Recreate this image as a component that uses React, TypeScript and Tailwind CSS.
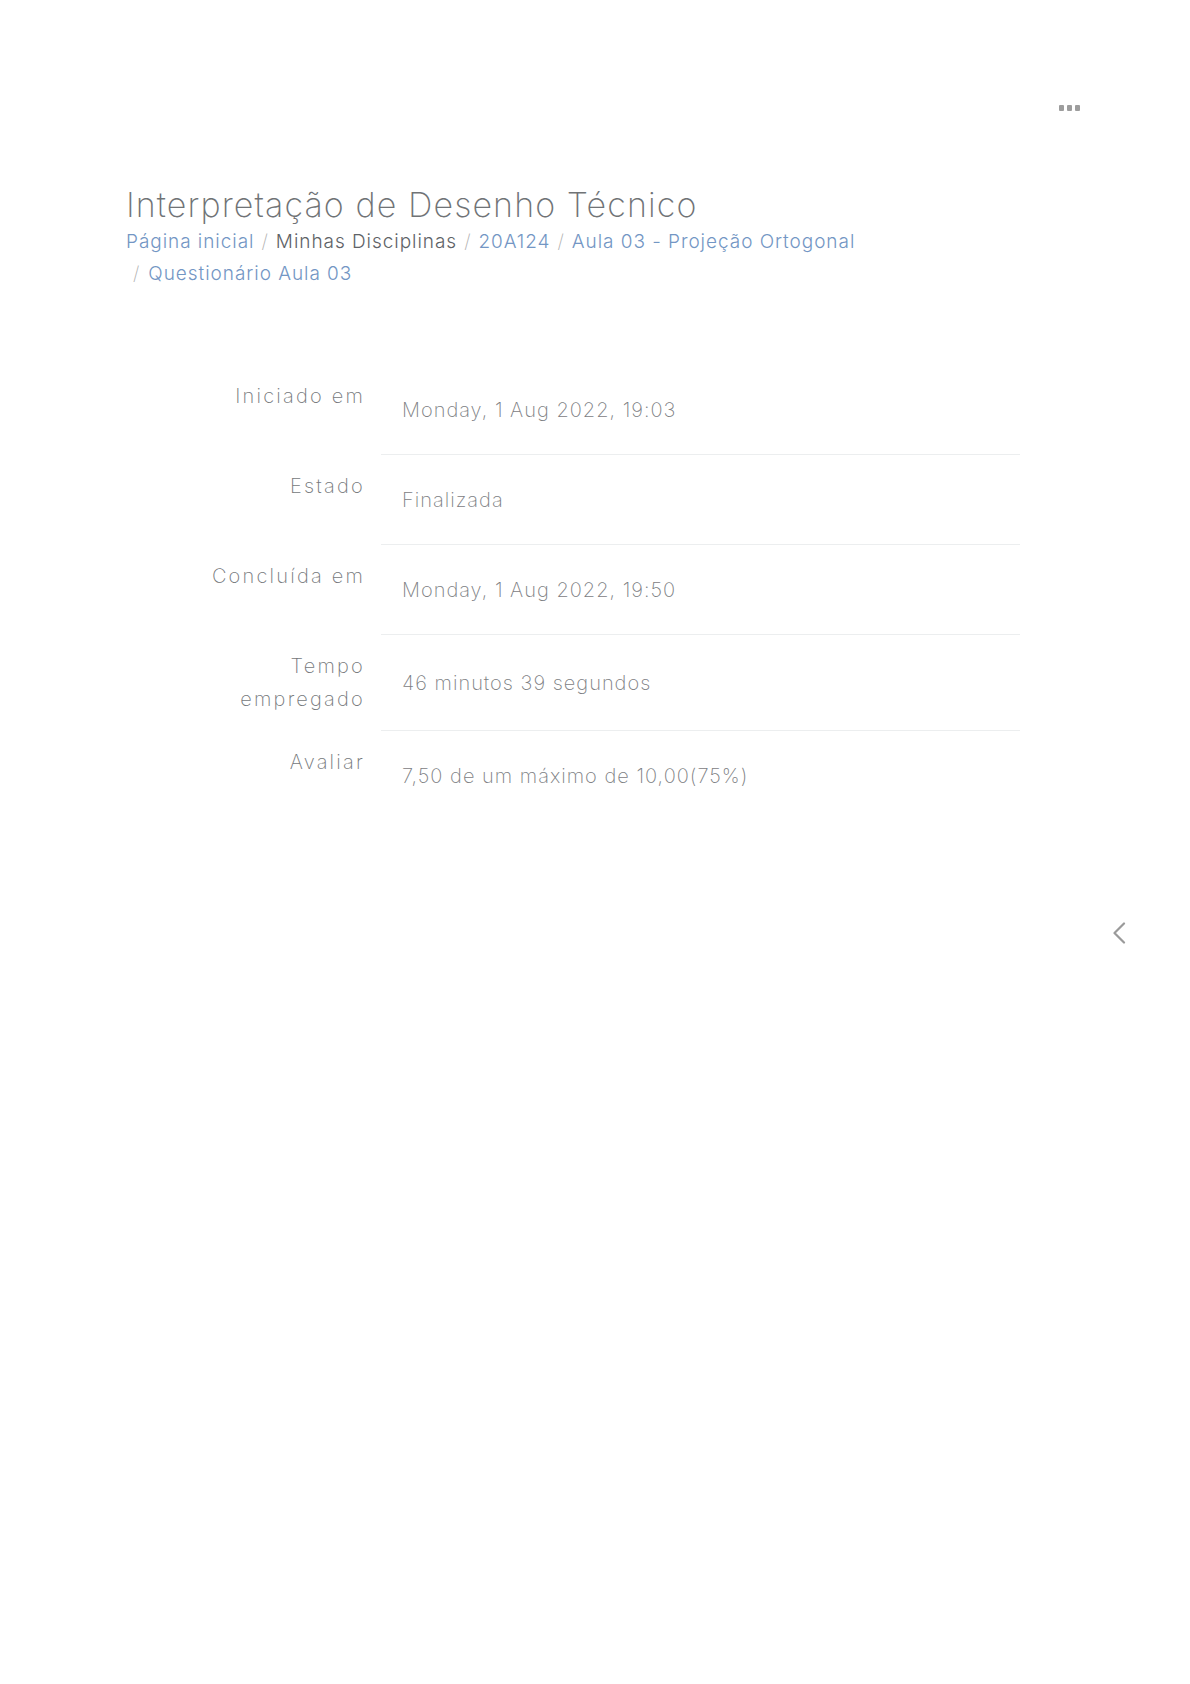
const font = { fontFamily: "Inter, 'Open Sans', sans-serif" };

const crumbs = [
  { label: "Página inicial", link: true },
  { label: "Minhas Disciplinas", link: false },
  { label: "20A124", link: true },
  { label: "Aula 03 - Projeção Ortogonal", link: true },
];

const rows: { label: string[]; value: string }[] = [
  { label: ["Iniciado em"], value: "Monday, 1 Aug 2022, 19:03" },
  { label: ["Estado"], value: "Finalizada" },
  { label: ["Concluída em"], value: "Monday, 1 Aug 2022, 19:50" },
  { label: ["Tempo", "empregado"], value: "46 minutos 39 segundos" },
  { label: ["Avaliar"], value: "7,50 de um máximo de 10,00(75%)" },
];

function Dots() {
  return (
    <div className="flex items-center gap-[3px]">
      <span className="w-[5px] h-[6px] rounded-[1px] bg-[#9d9d9d]" />
      <span className="w-[5px] h-[6px] rounded-[1px] bg-[#9d9d9d]" />
      <span className="w-[5px] h-[6px] rounded-[1px] bg-[#9d9d9d]" />
    </div>
  );
}

export default function App() {
  return (
    <div className="relative w-[1190px] min-h-[1684px] bg-white font-extralight" style={font}>
      {/* top bar */}
      <div className="flex justify-end pt-[105px] pr-[110px]">
        <Dots />
      </div>

      {/* page header */}
      <header className="pl-[126px] pt-[74px]">
        <h1 className="text-[34px] leading-[40px] text-[#707376] font-extralight tracking-[1.1px]">
          Interpretação de Desenho Técnico
        </h1>
        <nav className="mt-[1px] text-[19px] leading-[32px] tracking-[0.95px]">
          <div className="flex items-center">
            {crumbs.map((c, i) => (
              <span key={i} className="flex items-center">
                {i > 0 && <span className="px-[7px] text-[#b0b0b0]">/</span>}
                <span className={c.link ? "text-[#7396c4] font-light" : "text-[#606367] font-light"}>{c.label}</span>
              </span>
            ))}
          </div>
          <div className="flex items-center pl-[7px]">
            <span className="pr-[8px] text-[#b0b0b0]">/</span>
            <span className="text-[#7396c4] font-light">Questionário Aula 03</span>
          </div>
        </nav>
      </header>

      {/* attempt summary */}
      <div className="mt-[75px] ml-[126px] w-[894px] grid grid-cols-[255px_639px]">
        {rows.map((r, i) => (
          <div key={i} className="contents">
            <div className="pr-[16px] pt-[15px] pb-[15px] text-right text-[20px] leading-[33px] tracking-[2.2px] text-[#75787b]">
              {r.label.map((l) => (
                <div key={l}>{l}</div>
              ))}
            </div>
            <div
              className={
                "flex items-center px-[21px] pt-[31px] pb-[30px] text-[20px] leading-[28px] tracking-[1px] text-[#7d8083] " +
                (i < rows.length - 1 ? "border-b border-[#eceeef]" : "")
              }
            >
              {r.value}
            </div>
          </div>
        ))}
      </div>

      {/* drawer toggle */}
      <div className="absolute left-[1111px] top-[921px] w-[16px] h-[24px] flex items-center justify-center">
        <svg width="14" height="22" viewBox="0 0 14 22" fill="none">
          <path d="M12 1.5 L2.5 11 L12 20.5" stroke="#9a9a9a" strokeWidth="2.2" strokeLinecap="round" strokeLinejoin="round" />
        </svg>
      </div>
    </div>
  );
}
